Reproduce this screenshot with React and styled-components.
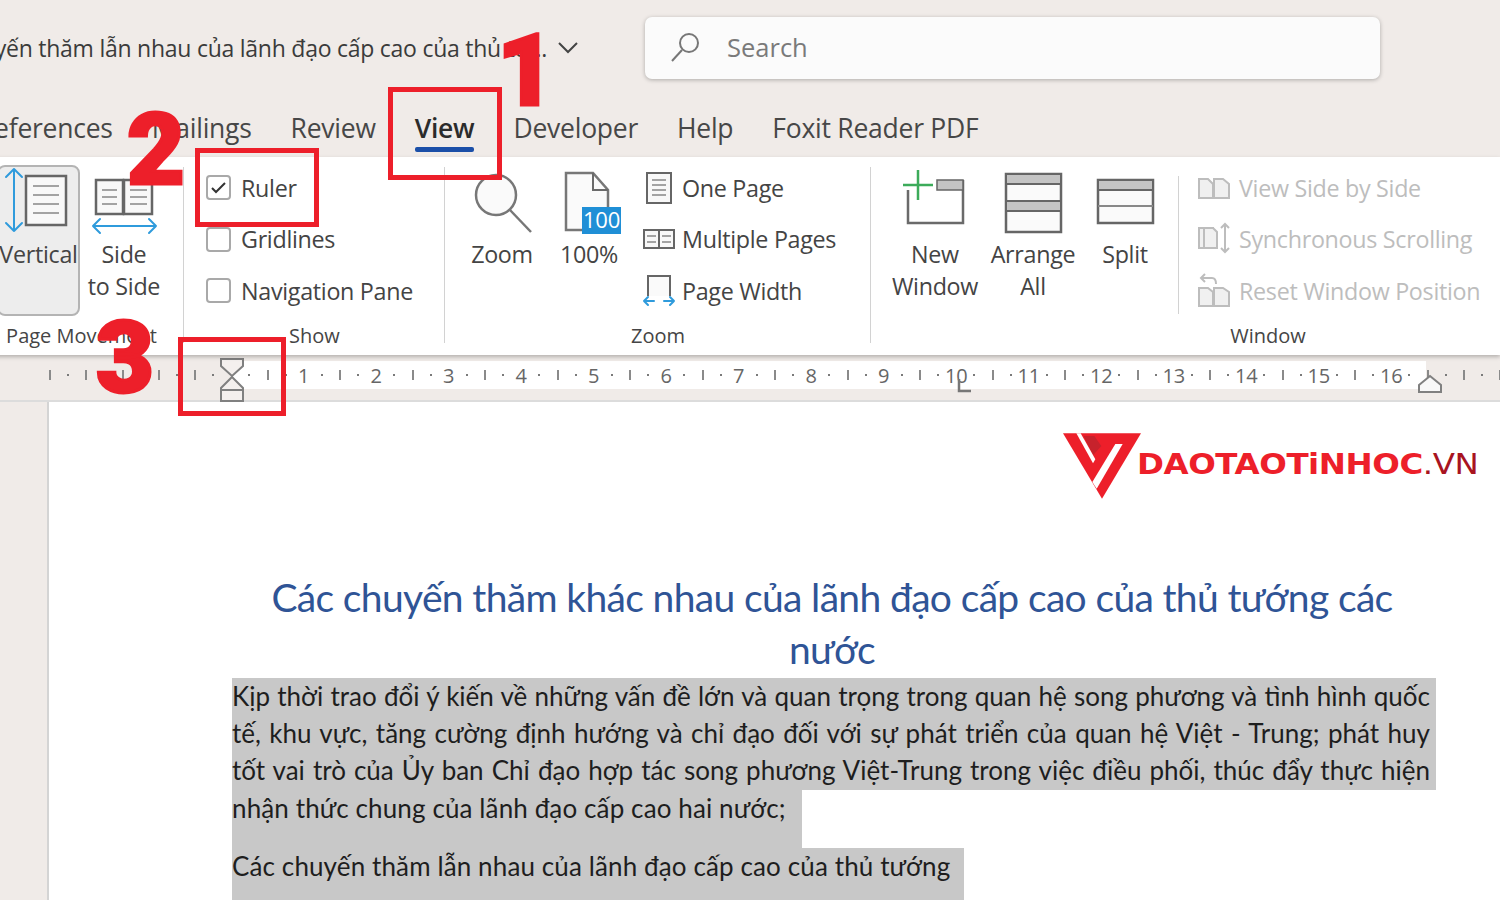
import styled, { createGlobalStyle } from "styled-components"

const UI_FONT = `"Open Sans", "Noto Sans", sans-serif`
const DOC_FONT = `"Lato", "Noto Sans", sans-serif`
const RED = "#ed1f2a"

const GlobalStyle = createGlobalStyle`
  html, body { margin: 0; padding: 0; height: 100%; overflow: hidden; }
  body { font-family: ${UI_FONT}; background: #f0ebe8; }
`

const Screen = styled.div`
  position: relative;
  width: 1500px;
  height: 900px;
  overflow: hidden;
  background: #f0ebe8;
  display: flex;
  flex-direction: column;
`

const TitleBar = styled.div`
  height: 96px;
  flex: none;
  display: flex;
  align-items: center;
`
const DocTitle = styled.div`
  width: 547px;
  display: flex;
  justify-content: flex-end;
  overflow: hidden;
  white-space: nowrap;
  font-size: 23px;
  letter-spacing: -0.25px;
  color: #3b3b3b;
`
const Chevron = styled.svg`
  width: 20px;
  height: 12px;
  margin-left: 11px;
  flex: none;
`
const SearchBox = styled.div`
  width: 735px;
  height: 62px;
  margin-left: 67px;
  box-sizing: border-box;
  padding: 0 0 3px 26px;
  display: flex;
  align-items: center;
  gap: 27px;
  background: #fbfbfb;
  border-radius: 7px;
  box-shadow: 0 1px 4px rgba(0, 0, 0, 0.28);
  font-size: 25.5px;
  color: #7a7a7a;
`

const Tabs = styled.div`
  height: 61px;
  flex: none;
  display: flex;
  gap: 39px;
  margin-left: -22px;
  white-space: nowrap;
`
const Tab = styled.div`
  position: relative;
  height: 61px;
  line-height: 64px;
  font-size: 26.5px;
  letter-spacing: -0.25px;
  color: ${(p) => (p.$active ? "#2b2b2b" : "#474747")};
  font-weight: ${(p) => (p.$active ? 600 : 400)};
  &::after {
    content: "";
    display: ${(p) => (p.$active ? "block" : "none")};
    position: absolute;
    left: 0;
    right: 0;
    bottom: 5px;
    height: 5px;
    border-radius: 2px;
    background: #1b4fa8;
  }
`

const Ribbon = styled.div`
  position: relative;
  z-index: 1;
  height: 198px;
  flex: none;
  display: flex;
  margin-left: -21px;
  background: #fff;
  box-shadow: 0 2px 4px rgba(0, 0, 0, 0.25);
  width: 1521px;
  overflow: hidden;
`
const Group = styled.div`
  position: relative;
  flex: none;
  width: ${(p) => p.$width}px;
  height: 198px;
  &::after {
    content: "";
    position: absolute;
    right: 0;
    top: 10px;
    bottom: 12px;
    width: 1px;
    background: #d2d2d2;
  }
`
const GroupBody = styled.div`
  height: 165px;
  display: flex;
  box-sizing: border-box;
  padding-left: ${(p) => p.$pad || 0}px;
  gap: ${(p) => p.$gap || 0}px;
`
const GroupLabel = styled.div`
  text-align: center;
  font-size: 20px;
  line-height: 28px;
  color: #454545;
`
const BigButton = styled.div`
  flex: none;
  width: ${(p) => p.$width}px;
  height: ${(p) => (p.$selected ? "151px" : "auto")};
  margin-top: 8px;
  box-sizing: border-box;
  display: flex;
  flex-direction: column;
  align-items: center;
  font-size: 23.3px;
  line-height: 32px;
  letter-spacing: -0.3px;
  text-align: center;
  color: #444;
  border-radius: 8px;
  border: 2px solid ${(p) => (p.$selected ? "#b4b4b4" : "transparent")};
  background: ${(p) => (p.$selected ? "#ededed" : "transparent")};
`
const BigIcon = styled.svg`
  width: 66px;
  height: 66px;
  flex: none;
  margin: 3px 0 2px;
  overflow: visible;
`
const SmallList = styled.div`
  flex: none;
  display: flex;
  flex-direction: column;
  padding-top: 5px;
  margin-left: ${(p) => p.$offset || 0}px;
`
const SmallRow = styled.div`
  height: 51.5px;
  display: flex;
  align-items: center;
  gap: ${(p) => (p.$disabled ? 9 : 7)}px;
  white-space: nowrap;
  font-size: 23.3px;
  letter-spacing: -0.3px;
  color: ${(p) => (p.$disabled ? "#bdbdbd" : "#444")};
`
const SmallIcon = styled.svg`
  width: 32px;
  height: 34px;
  flex: none;
  overflow: visible;
`
const CheckBox = styled.span`
  width: 25px;
  height: 25px;
  flex: none;
  margin-right: 3px;
  box-sizing: border-box;
  border: 2px solid #a9a9a9;
  border-radius: 4px;
  background: #fff;
  display: flex;
  align-items: center;
  justify-content: center;
`
const WindowDivider = styled.div`
  flex: none;
  width: 1px;
  height: 138px;
  margin: 19px 0 0 13px;
  background: #d2d2d2;
`

const Ruler = styled.div`
  position: relative;
  height: 47px;
  flex: none;
  box-sizing: border-box;
  padding-top: 6px;
  background: #f0ebe8;
  border-bottom: 2px solid #dcdcdc;
`
const TickRow = styled.div`
  height: 28px;
  padding-left: 41px;
  display: flex;
  align-items: center;
  overflow: hidden;
  background: linear-gradient(
    to right,
    #f0ebe8 232px,
    #fff 232px,
    #fff 1426px,
    #f0ebe8 1426px
  );
`
const TickCell = styled.div`
  flex: none;
  width: 18.13px;
  height: 28px;
  display: flex;
  align-items: center;
  justify-content: center;
  font-size: 20px;
  color: #666;
  white-space: nowrap;
`
const TickBar = styled.span`
  width: 2px;
  height: 10px;
  background: #8a8a8a;
`
const TickDot = styled.span`
  width: 2px;
  height: 2px;
  background: #7a7a7a;
`
const RulerMarker = styled.svg`
  position: absolute;
  left: ${(p) => p.$x}px;
  top: ${(p) => p.$y}px;
  overflow: visible;
`

const DocArea = styled.div`
  flex: 1;
  display: flex;
  min-height: 0;
`
const Gutter = styled.div`
  width: 47px;
  flex: none;
  border-right: 2px solid #d4d4d4;
`
const Page = styled.div`
  flex: 1;
  background: #fff;
  padding: 169px 0 0 183px;
  font-family: ${DOC_FONT};
  overflow: hidden;
`
const Heading = styled.h1`
  width: 1200px;
  margin: 0 0 3px;
  text-align: center;
  font-size: 39px;
  font-weight: 400;
  line-height: 52px;
  letter-spacing: -0.65px;
  color: #2f5496;
`
const Line = styled.div`
  width: ${(p) => p.$width}px;
  height: ${(p) => p.$height || 37.2}px;
  line-height: 37px;
  box-sizing: border-box;
  padding-right: ${(p) => (p.$full ? "6px" : "0")};
  background: #c8c8c8;
  color: #1e1e1e;
  font-size: 26px;
  letter-spacing: ${(p) => (p.$full ? "0" : "0.12px")};
  white-space: ${(p) => (p.$full ? "normal" : "nowrap")};
  text-align: justify;
  text-align-last: ${(p) => (p.$full ? "justify" : "left")};
`

const Annotation = styled.div`
  position: absolute;
  left: ${(p) => p.$x}px;
  top: ${(p) => p.$y}px;
  width: ${(p) => p.$w}px;
  height: ${(p) => p.$h}px;
  box-sizing: border-box;
  border: 5px solid ${RED};
  z-index: 3;
`
const StepNumber = styled.div`
  position: absolute;
  left: ${(p) => p.$x}px;
  top: ${(p) => p.$y}px;
  z-index: 4;
  font-family: "Roboto", "Lato", sans-serif;
  font-weight: 900;
  font-size: 100px;
  line-height: 100px;
  color: ${RED};
  -webkit-text-stroke: 3px ${RED};
`
const Logo = styled.div`
  position: absolute;
  left: 1063px;
  top: 433px;
  z-index: 2;
  display: flex;
`
const LogoMark = styled.svg`
  width: 78px;
  height: 66px;
  flex: none;
`
const LogoText = styled.div`
  margin: 13px 0 0 -4px;
  font-family: "DejaVu Sans", sans-serif;
  font-weight: 700;
  font-size: 29px;
  line-height: 36px;
  letter-spacing: -0.4px;
  white-space: nowrap;
  color: ${RED};
  transform: scaleX(1.12);
  transform-origin: left center;
`
const LogoSuffix = styled.span`
  color: #a8141f;
  font-weight: 400;
`

const ln = { fill: "none", stroke: "#6a6a6a", strokeWidth: 2 }
const soft = { fill: "none", stroke: "#a3a3a3", strokeWidth: 2 }
const blue = { fill: "none", stroke: "#2f9bdc", strokeWidth: 2, strokeLinecap: "round", strokeLinejoin: "round" }

const VerticalIcon = () => (
  <BigIcon viewBox="0 0 66 66">
    <path d="M8 -1V61M0 7l8-8 8 8M0 53l8 8 8-8" {...blue} />
    <rect x="20" y="6" width="40" height="49" fill="#f8f8f8" stroke="#666" strokeWidth="2.5" />
    <path d="M27 16H53M27 25H53M27 34H53M27 43H53" {...soft} />
  </BigIcon>
)
const SideIcon = () => (
  <BigIcon viewBox="0 0 66 66">
    <rect x="5" y="10" width="27" height="34" fill="#f8f8f8" stroke="#666" strokeWidth="2.5" />
    <rect x="33" y="10" width="28" height="34" fill="#f8f8f8" stroke="#666" strokeWidth="2.5" />
    <path d="M11 20H26M11 27H26M11 34H26M39 20H56M39 27H56M39 34H56" {...soft} />
    <path d="M2 56H65M9 49l-7 7 7 7M58 49l7 7-7 7" {...blue} />
  </BigIcon>
)
const ZoomIcon = () => (
  <BigIcon viewBox="0 0 66 66">
    <circle cx="27" cy="25" r="20" fill="#fafafa" stroke="#777" strokeWidth="2.5" />
    <path d="M41 40L62 62" stroke="#777" strokeWidth="2.5" />
  </BigIcon>
)
const HundredIcon = () => (
  <BigIcon viewBox="0 0 66 66">
    <path d="M10 3H37L52 20V60H10Z" fill="#fafafa" stroke="#777" strokeWidth="2.5" />
    <path d="M37 3V20H52" {...ln} />
    <rect x="26" y="37" width="39" height="27" fill="#1f8fd6" />
    <text x="45.5" y="58" textAnchor="middle" fontSize="22" fill="#fff" fontFamily="Open Sans, sans-serif">100</text>
  </BigIcon>
)
const NewWindowIcon = () => (
  <BigIcon viewBox="0 0 66 66">
    <path d="M6 20V53H61V10" {...ln} strokeWidth="2.5" />
    <rect x="35" y="10" width="26" height="10" fill="#c4c4c4" stroke="#666" strokeWidth="1.5" />
    <path d="M16 0V30M1 15H31" stroke="#3cab5a" strokeWidth="2.5" />
  </BigIcon>
)
const ArrangeIcon = () => (
  <BigIcon viewBox="0 0 66 66">
    <rect x="6" y="4" width="55" height="58" fill="#fafafa" stroke="#666" strokeWidth="2.5" />
    <rect x="6" y="4" width="55" height="10" fill="#c4c4c4" stroke="#666" strokeWidth="2" />
    <rect x="6" y="31" width="55" height="10" fill="#c4c4c4" stroke="#666" strokeWidth="2" />
  </BigIcon>
)
const SplitIcon = () => (
  <BigIcon viewBox="0 0 66 66">
    <rect x="6" y="10" width="55" height="43" fill="#fafafa" stroke="#666" strokeWidth="2.5" />
    <rect x="6" y="10" width="55" height="10" fill="#c4c4c4" stroke="#666" strokeWidth="2" />
    <path d="M6 36H61" stroke="#888" strokeWidth="2" />
  </BigIcon>
)
const OnePageIcon = () => (
  <SmallIcon viewBox="0 0 32 34">
    <rect x="4" y="2" width="24" height="30" fill="#f8f8f8" stroke="#666" strokeWidth="2" />
    <path d="M9 9H23M9 14H23M9 19H23M9 24H23" {...soft} />
  </SmallIcon>
)
const MultiPagesIcon = () => (
  <SmallIcon viewBox="0 0 32 34">
    <rect x="1" y="8" width="15" height="18" fill="#f8f8f8" stroke="#666" strokeWidth="2" />
    <rect x="16" y="8" width="15" height="18" fill="#f8f8f8" stroke="#666" strokeWidth="2" />
    <path d="M4 14H13M4 20H13M19 14H28M19 20H28" {...soft} />
  </SmallIcon>
)
const PageWidthIcon = () => (
  <SmallIcon viewBox="0 0 32 34">
    <path d="M5 22V2H27V22" fill="#fafafa" stroke="#666" strokeWidth="2" />
    <path d="M1 27H11M5 23l-4 4 4 4M21 27H31M27 23l4 4-4 4" {...blue} />
  </SmallIcon>
)
const dim = { fill: "#f0f0f0", stroke: "#bdbdbd", strokeWidth: 2 }
const SideBySideIcon = () => (
  <SmallIcon viewBox="0 0 32 34">
    <path d="M1 8H10L15 13V27H1Z" {...dim} />
    <path d="M16 8H25L31 13V27H16Z" {...dim} />
  </SmallIcon>
)
const SyncIcon = () => (
  <SmallIcon viewBox="0 0 32 34">
    <rect x="1" y="6" width="14" height="20" {...dim} />
    <path d="M6 6H15L19 10V26H6Z" {...dim} />
    <path d="M27 2V30M23 6l4-4 4 4M23 26l4 4 4-4" fill="none" stroke="#bdbdbd" strokeWidth="2" />
  </SmallIcon>
)
const ResetIcon = () => (
  <SmallIcon viewBox="0 0 32 34">
    <path d="M1 14H10L15 18V32H1Z" {...dim} />
    <path d="M16 14H25L31 18V32H16Z" {...dim} />
    <path d="M3 4H14C17 4 18 6 18 10M7 0L3 4l4 4" fill="none" stroke="#bdbdbd" strokeWidth="2" />
  </SmallIcon>
)

const renderTick = (i) => {
  if (i >= 14 && i <= 74 && (i - 14) % 4 === 0) return (i - 14) / 4 + 1
  if (i === 10) return null
  return i % 2 === 0 ? <TickBar /> : <TickDot />
}

const App = () => {
  const ticks = Array.from({ length: 81 }, (_, i) => i)

  return (
    <Screen>
      <GlobalStyle />
      <TitleBar>
        <DocTitle>
          <span>Các chuyến thăm lẫn nhau của lãnh đạo cấp cao của thủ tư...</span>
        </DocTitle>
        <Chevron viewBox="0 0 20 12">
          <path d="M1 1l9 9 9-9" fill="none" stroke="#444" strokeWidth="2" />
        </Chevron>
        <SearchBox>
          <svg width="29" height="30" viewBox="0 0 29 30">
            <circle cx="18" cy="11" r="9" fill="none" stroke="#777" strokeWidth="2" />
            <path d="M11 18L1 29" stroke="#777" strokeWidth="2" />
          </svg>
          Search
        </SearchBox>
      </TitleBar>

      <Tabs>
        <Tab>References</Tab>
        <Tab>Mailings</Tab>
        <Tab>Review</Tab>
        <Tab $active>View</Tab>
        <Tab>Developer</Tab>
        <Tab>Help</Tab>
        <Tab>Foxit Reader PDF</Tab>
      </Tabs>

      <Ribbon>
        <Group $width={205}>
          <GroupBody $pad={18} $gap={2}>
            <BigButton $width={83} $selected>
              <VerticalIcon />
              Vertical
            </BigButton>
            <BigButton $width={84}>
              <SideIcon />
              Side
              <br />
              to Side
            </BigButton>
          </GroupBody>
          <GroupLabel>Page Movement</GroupLabel>
        </Group>

        <Group $width={261}>
          <GroupBody $pad={22}>
            <SmallList>
              <SmallRow>
                <CheckBox>
                  <svg width="15" height="13" viewBox="0 0 15 13">
                    <path d="M1 7l4 4 9-9" fill="none" stroke="#333" strokeWidth="2" />
                  </svg>
                </CheckBox>
                Ruler
              </SmallRow>
              <SmallRow>
                <CheckBox />
                Gridlines
              </SmallRow>
              <SmallRow>
                <CheckBox />
                Navigation Pane
              </SmallRow>
            </SmallList>
          </GroupBody>
          <GroupLabel>Show</GroupLabel>
        </Group>

        <Group $width={426}>
          <GroupBody $pad={24} $gap={18}>
            <BigButton $width={66}>
              <ZoomIcon />
              Zoom
            </BigButton>
            <BigButton $width={72}>
              <HundredIcon />
              100%
            </BigButton>
            <SmallList>
              <SmallRow>
                <OnePageIcon />
                One Page
              </SmallRow>
              <SmallRow>
                <MultiPagesIcon />
                Multiple Pages
              </SmallRow>
              <SmallRow>
                <PageWidthIcon />
                Page Width
              </SmallRow>
            </SmallList>
          </GroupBody>
          <GroupLabel>Zoom</GroupLabel>
        </Group>

        <Group $width={794}>
          <GroupBody $pad={18}>
            <BigButton $width={92}>
              <NewWindowIcon />
              New
              <br />
              Window
            </BigButton>
            <BigButton $width={104}>
              <ArrangeIcon />
              Arrange
              <br />
              All
            </BigButton>
            <BigButton $width={80}>
              <SplitIcon />
              Split
            </BigButton>
            <WindowDivider />
            <SmallList $offset={19}>
              <SmallRow $disabled>
                <SideBySideIcon />
                View Side by Side
              </SmallRow>
              <SmallRow $disabled>
                <SyncIcon />
                Synchronous Scrolling
              </SmallRow>
              <SmallRow $disabled>
                <ResetIcon />
                Reset Window Position
              </SmallRow>
            </SmallList>
          </GroupBody>
          <GroupLabel>Window</GroupLabel>
        </Group>
      </Ribbon>

      <Ruler>
        <TickRow>
          {ticks.map((i) => (
            <TickCell key={i}>{renderTick(i)}</TickCell>
          ))}
        </TickRow>
        <RulerMarker $x={219} $y={2} width="26" height="44" viewBox="0 0 26 44">
          <path d="M2 2H24V9L13 19L2 9Z" fill="#f4f0ee" stroke="#808080" strokeWidth="2" />
          <path d="M13 20L24 31V44H2V31Z" fill="#f4f0ee" stroke="#808080" strokeWidth="2" />
          <path d="M2 33H24" stroke="#808080" strokeWidth="2" />
        </RulerMarker>
        <RulerMarker $x={957} $y={24} width="14" height="14" viewBox="0 0 14 14">
          <path d="M2 0V12H14" fill="none" stroke="#777" strokeWidth="2.5" />
        </RulerMarker>
        <RulerMarker $x={1418} $y={20} width="24" height="18" viewBox="0 0 24 18">
          <path d="M1 10L12 1L23 10V17H1Z" fill="#f8f8f8" stroke="#808080" strokeWidth="2" />
        </RulerMarker>
      </Ruler>

      <DocArea>
        <Gutter />
        <Page>
          <Heading>
            Các chuyến thăm khác nhau của lãnh đạo cấp cao của thủ tướng các
            <br />
            nước
          </Heading>
          <Line $width={1204} $full>
            Kịp thời trao đổi ý kiến về những vấn đề lớn và quan trọng trong quan hệ song phương và tình hình quốc
          </Line>
          <Line $width={1204} $full>
            tế, khu vực, tăng cường định hướng và chỉ đạo đối với sự phát triển của quan hệ Việt - Trung; phát huy
          </Line>
          <Line $width={1204} $full>
            tốt vai trò của Ủy ban Chỉ đạo hợp tác song phương Việt-Trung trong việc điều phối, thúc đẩy thực hiện
          </Line>
          <Line $width={570} $height={58}>
            nhận thức chung của lãnh đạo cấp cao hai nước;
          </Line>
          <Line $width={732} $height={60}>
            Các chuyến thăm lẫn nhau của lãnh đạo cấp cao của thủ tướng
          </Line>
        </Page>
      </DocArea>

      <Logo>
        <LogoMark viewBox="68 40 234 196">
          <path d="M68 40H302L185 236Z" fill={RED} />
          <path d="M130 48H162L183 78L158 106Z" fill="#c7222c" />
          <path d="M108 40H121L165 118L158 130Z" fill="#fff" />
          <path d="M225 72H247L169 206L156 186Z" fill="#fff" />
        </LogoMark>
        <LogoText>
          DAOTAOTiNHOC<LogoSuffix>.VN</LogoSuffix>
        </LogoText>
      </Logo>

      <Annotation $x={388} $y={87} $w={114} $h={93} />
      <Annotation $x={195} $y={148} $w={124} $h={79} />
      <Annotation $x={178} $y={337} $w={108} $h={79} />
      <StepNumber $x={497} $y={21}>1</StepNumber>
      <StepNumber $x={127} $y={100}>2</StepNumber>
      <StepNumber $x={96} $y={308}>3</StepNumber>
    </Screen>
  )
}

export default App
